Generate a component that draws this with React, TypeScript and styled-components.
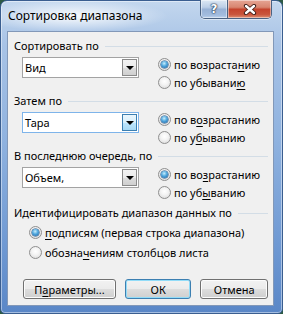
import React from "react";
import styled, { createGlobalStyle, css } from "styled-components";

const GlobalStyle = createGlobalStyle`
  html, body {
    margin: 0;
    padding: 0;
    background: #2d5a44;
  }
  body {
    font-family: "Noto Sans", "Open Sans", sans-serif;
    font-size: 11px;
    color: #000;
  }
  u {
    text-decoration-thickness: 1px;
    text-underline-offset: 2px;
  }
`;

const Window = styled.div`
  width: 283px;
  height: 314px;
  box-sizing: border-box;
  display: flex;
  flex-direction: column;
  border: 1px solid #3a5e90;
  border-radius: 7px 7px 5px 5px;
  padding: 0 8px 7px 6px;
  background:
    radial-gradient(ellipse 95px 16px at 72px 15px, rgba(255, 255, 255, 0.9), rgba(255, 255, 255, 0) 100%),
    linear-gradient(180deg, #c3d7ee 0%, #a8c3e6 14%, #8fb2df 45%, #6f99d3 78%, #5a87c7 100%);
  box-shadow: inset 0 0 0 1px rgba(255, 255, 255, 0.45);
`;

const TitleBar = styled.div`
  height: 30px;
  display: flex;
  align-items: flex-start;
  justify-content: space-between;
`;

const Title = styled.div`
  padding: 7px 0 0 1px;
  line-height: 15px;
  font-size: 12px;
  color: #000;
`;

const CaptionGroup = styled.div`
  display: flex;
  margin: -1px 2px 0 0;
  border: 1px solid #4a6282;
  border-top: none;
  border-radius: 0 0 5px 5px;
  overflow: hidden;
  box-shadow: 0 1px 0 rgba(255, 255, 255, 0.5);
`;

const CaptionButton = styled.div<{ $close?: boolean }>`
  height: 18px;
  display: flex;
  align-items: center;
  justify-content: center;
  width: ${(p) => (p.$close ? "43px" : "26px")};
  box-shadow: inset 0 0 0 1px rgba(255, 255, 255, 0.45);
  ${(p) =>
    p.$close
      ? css`
          background: linear-gradient(180deg, #e6a594 0%, #d88670 40%, #c5442d 52%, #c9553c 80%, #dc8e72 100%);
        `
      : css`
          background: linear-gradient(180deg, #dde8f4 0%, #bccfe7 40%, #98b2d6 52%, #a3bddf 85%, #bfd3ec 100%);
          border-right: 1px solid #4a6282;
        `}
`;

const HelpGlyph = styled.span`
  font-family: "DejaVu Sans", sans-serif;
  font-weight: bold;
  font-size: 12px;
  color: #fff;
  line-height: 1;
  text-shadow: 0 0 1px #1d2f4a, 0 0 1px #1d2f4a, 0 0 2px #1d2f4a;
`;

const Client = styled.div`
  flex: 1;
  display: flex;
  flex-direction: column;
  background: #f0f0f0;
  border: 1px solid #8298b8;
  padding: 6px 5px 6px 6px;
`;

const Section = styled.div<{ $gapTop?: number }>`
  display: flex;
  flex-direction: column;
  margin-top: ${(p) => p.$gapTop ?? 0}px;
  margin-bottom: 2px;
`;

const Header = styled.div`
  height: 15px;
  display: flex;
  align-items: center;
  gap: 6px;
  white-space: nowrap;
  line-height: 15px;
`;

const GroupLine = styled.div`
  flex: 1;
  height: 1px;
  background: #d3dde6;
  margin-top: 1px;
`;

const SortRow = styled.div`
  display: flex;
  margin-top: 2px;
`;

const Combo = styled.div<{ $hot?: boolean }>`
  margin: 2px 0 0 8px;
  width: 117px;
  height: 21px;
  box-sizing: border-box;
  display: flex;
  align-items: stretch;
  background: #fff;
  border: 1px solid ${(p) => (p.$hot ? "#7eb4ea" : "#a3a3a3")};
`;

const ComboText = styled.div`
  flex: 1;
  padding-left: 2px;
  display: flex;
  align-items: center;
`;

const ComboArrow = styled.div<{ $hot?: boolean }>`
  width: 15px;
  margin: 1px;
  box-sizing: border-box;
  display: flex;
  align-items: center;
  justify-content: center;
  ${(p) =>
    p.$hot
      ? css`
          border: 1px solid #3c7fb1;
          background: linear-gradient(180deg, #eaf6fd 0%, #d9f0fc 50%, #bee6fd 51%, #a7d9f5 100%);
        `
      : css`
          border: 1px solid #8a8a8a;
          background: linear-gradient(180deg, #f2f2f2 0%, #ebebeb 50%, #dddddd 51%, #cfcfcf 100%);
        `}
  &::after {
    content: "";
    width: 0;
    height: 0;
    border-left: 4px solid transparent;
    border-right: 4px solid transparent;
    border-top: 4px solid #000;
    margin-top: 1px;
  }
`;

const RadioColumn = styled.div<{ $indent: number; $row: number }>`
  display: flex;
  flex-direction: column;
  margin-left: ${(p) => p.$indent}px;
  & > * {
    height: ${(p) => p.$row}px;
  }
`;

const RadioRow = styled.div`
  display: flex;
  align-items: center;
  gap: 3px;
  white-space: nowrap;
`;

const RadioDot = styled.span<{ $checked?: boolean }>`
  width: 13px;
  height: 13px;
  box-sizing: border-box;
  border-radius: 50%;
  border: 1px solid #8f8f8f;
  background: radial-gradient(circle at 50% 40%, #ffffff 0%, #f4f4f4 40%, #d6d6d6 100%);
  display: flex;
  align-items: center;
  justify-content: center;
  flex: none;
  ${(p) =>
    p.$checked &&
    css`
      &::after {
        content: "";
        width: 7px;
        height: 7px;
        border-radius: 50%;
        background: radial-gradient(circle at 45% 35%, #c9effd 0%, #4fa6dd 45%, #1a5c9c 100%);
        box-shadow: 0 0 0 0.5px #16477a;
      }
    `}
`;

const ButtonRow = styled.div`
  margin-top: auto;
  display: flex;
  padding-left: 9px;
  gap: 9px;
`;

const Button = styled.div<{ $w: number; $default?: boolean }>`
  width: ${(p) => p.$w}px;
  height: 20px;
  box-sizing: border-box;
  border-radius: 3px;
  display: flex;
  align-items: center;
  justify-content: center;
  border: 1px solid ${(p) => (p.$default ? "#3c7fb1" : "#707070")};
  background: linear-gradient(180deg, #f2f2f2 0%, #ebebeb 50%, #dddddd 51%, #cfcfcf 100%);
  box-shadow: inset 0 0 0 1px ${(p) => (p.$default ? "#92dcf8" : "#fcfcfc")};
  & + & {
    margin-left: 0;
  }
`;

type SortSection = {
  title: string;
  value: string;
  hot?: boolean;
  asc: React.ReactNode;
  desc: React.ReactNode;
};

const sections: SortSection[] = [
  {
    title: "Сортировать по",
    value: "Вид",
    asc: <>по возраста<u>н</u>ию</>,
    desc: <>по убывани<u>ю</u></>,
  },
  {
    title: "Затем по",
    value: "Тара",
    hot: true,
    asc: <>по в<u>о</u>зрастанию</>,
    desc: <>по у<u>б</u>ыванию</>,
  },
  {
    title: "В последнюю очередь, по",
    value: "Объем,",
    asc: <>по во<u>з</u>растанию</>,
    desc: <>по уб<u>ы</u>ванию</>,
  },
];

const CloseGlyph = () => (
  <svg width="14" height="11" viewBox="0 0 14 11">
    <path d="M3 2 L11 9 M11 2 L3 9" stroke="#3b1a14" strokeWidth="4.2" strokeLinecap="round" />
    <path d="M3 2 L11 9 M11 2 L3 9" stroke="#fff" strokeWidth="2.4" strokeLinecap="round" />
  </svg>
);

export default function App() {
  return (
    <>
      <GlobalStyle />
      <Window>
        <TitleBar>
          <Title>Сортировка диапазона</Title>
          <CaptionGroup>
            <CaptionButton>
              <HelpGlyph>?</HelpGlyph>
            </CaptionButton>
            <CaptionButton $close>
              <CloseGlyph />
            </CaptionButton>
          </CaptionGroup>
        </TitleBar>
        <Client>
          {sections.map((s) => (
            <Section key={s.title}>
              <Header>
                {s.title}
                <GroupLine />
              </Header>
              <SortRow>
                <Combo $hot={s.hot}>
                  <ComboText>{s.value}</ComboText>
                  <ComboArrow $hot={s.hot} />
                </Combo>
                <RadioColumn $indent={19} $row={18}>
                  <RadioRow>
                    <RadioDot $checked />
                    <span>{s.asc}</span>
                  </RadioRow>
                  <RadioRow>
                    <RadioDot />
                    <span>{s.desc}</span>
                  </RadioRow>
                </RadioColumn>
              </SortRow>
            </Section>
          ))}
          <Section $gapTop={2}>
            <Header>
              Идентифицировать диапазон данных по
              <GroupLine />
            </Header>
            <SortRow>
              <RadioColumn $indent={15} $row={20}>
                <RadioRow>
                  <RadioDot $checked />
                  <span>
                    <u>п</u>одписям (первая строка диапазона)
                  </span>
                </RadioRow>
                <RadioRow>
                  <RadioDot />
                  <span>
                    обозна<u>ч</u>ениям столбцов листа
                  </span>
                </RadioRow>
              </RadioColumn>
            </SortRow>
          </Section>
          <ButtonRow>
            <Button $w={95}>
              П<u>а</u>раметры...
            </Button>
            <Button $w={68} $default>
              ОК
            </Button>
            <Button $w={69}>Отмена</Button>
          </ButtonRow>
        </Client>
      </Window>
    </>
  );
}
